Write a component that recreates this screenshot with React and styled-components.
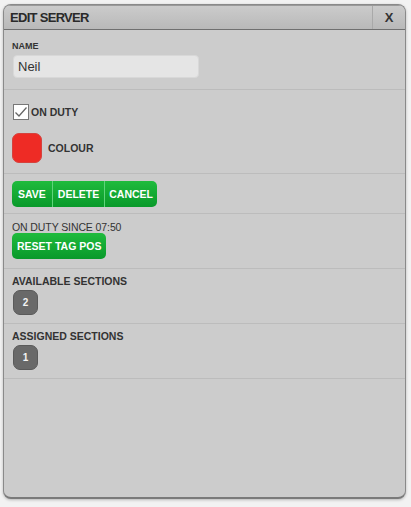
import React from "react";
import styled, { createGlobalStyle } from "styled-components";

const Global = createGlobalStyle`
  html, body { margin: 0; padding: 0; background: #f2f2f2; }
  body { font-family: "Liberation Sans", Arial, sans-serif; }
  * { box-sizing: border-box; }
`;

const Page = styled.div`
  padding: 4px 5px 8px 3px;
  height: 507px;
`;

const Panel = styled.div`
  height: 495px;
  background: #cccccc;
  border: 1px solid #8a8a8a;
  border-bottom: 2px solid #7a7a7a;
  border-radius: 8px;
  box-shadow: 0 1px 3px rgba(0,0,0,0.25);
  overflow: hidden;
  display: flex;
  flex-direction: column;
`;

const Header = styled.div`
  display: flex;
  height: 25px;
  background: linear-gradient(#cbcbcb, #b9b9b9);
  border-bottom: 1px solid #707070;
  border-top: 1px solid #9a9a9a;
`;

const Title = styled.div`
  flex: 1;
  padding-left: 6px;
  display: flex;
  align-items: center;
  font-size: 13px;
  font-weight: bold;
  color: #2a2a2a;
  letter-spacing: -0.7px;
`;

const Close = styled.div`
  width: 33px;
  display: flex;
  align-items: center;
  justify-content: center;
  border-left: 1px solid #a9a9a9;
  font-size: 13px;
  font-weight: bold;
  color: #333;
`;

const Section = styled.div`
  padding: ${p => p.$pad || "8px 8px 10px 8px"};
  border-bottom: 1px solid #bcbcbc;
  display: flex;
  flex-direction: column;
  gap: ${p => p.$gap || "0px"};
`;

const SmallLabel = styled.div`
  font-size: 9px;
  font-weight: bold;
  color: #333;
  margin-bottom: 4px;
`;

const Input = styled.div`
  width: 186px;
  height: 23px;
  margin-left: 1px;
  background: #e5e5e5;
  border-radius: 4px;
  border: 1px solid #d8d8d8;
  display: flex;
  align-items: center;
  padding-left: 4px;
  font-size: 13px;
  color: #333;
`;

const Row = styled.div`
  display: flex;
  align-items: center;
  gap: ${p => p.$gap || "4px"};
`;

const Check = styled.div`
  width: 16px;
  height: 16px;
  margin-left: 1px;
  background: #fff;
  border: 1px solid #777;
  display: flex;
  align-items: center;
  justify-content: center;
`;

const BoldText = styled.div`
  font-size: 10.5px;
  font-weight: bold;
  color: #333;
`;

const Swatch = styled.div`
  width: 30px;
  height: 30px;
  background: #ee2b25;
  border-radius: 7px;
  border: 1px solid #d5423d;
`;

const BtnGroup = styled.div`
  display: flex;
`;

const Btn = styled.div`
  height: 26px;
  padding: 0 ${p => p.$px || "7px"};
  display: flex;
  align-items: center;
  background: linear-gradient(#1fbb3d, #09992a);
  color: #fff;
  font-size: 10.5px;
  font-weight: bold;
  border-left: 1px solid #5fd47a;
  &:first-child { border-left: none; border-radius: 5px 0 0 5px; }
  &:last-child { border-radius: 0 5px 5px 0; }
  &:only-child { border-radius: 5px; }
`;

const Plain = styled.div`
  font-size: 10.5px;
  color: #333;
  letter-spacing: -0.1px;
`;

const Badge = styled.div`
  width: 25px;
  height: 25px;
  margin-left: 1px;
  background: #696969;
  border-radius: 7px;
  border: 1px solid #5a5a5a;
  color: #f4f4f4;
  font-size: 10px;
  font-weight: bold;
  display: flex;
  align-items: center;
  justify-content: center;
`;

export default function App() {
  return (
    <>
      <Global />
      <Page>
        <Panel>
          <Header>
            <Title>EDIT SERVER</Title>
            <Close>X</Close>
          </Header>
          <Section $pad="11px 8px 11px 8px">
            <SmallLabel>NAME</SmallLabel>
            <Input>Neil</Input>
          </Section>
          <Section $pad="14px 8px 10px 8px" $gap="13px">
            <Row $gap="2px">
              <Check>
                <svg width="14" height="14" viewBox="0 0 14 14">
                  <path d="M1.5 7.5 L5 11 L12.5 2.5" fill="none" stroke="#666" strokeWidth="1.3" />
                </svg>
              </Check>
              <BoldText>ON DUTY</BoldText>
            </Row>
            <Row $gap="6px">
              <Swatch />
              <BoldText>COLOUR</BoldText>
            </Row>
          </Section>
          <Section $pad="7px 8px 6px 8px">
            <BtnGroup>
              <Btn $px="6px">SAVE</Btn>
              <Btn $px="5px">DELETE</Btn>
              <Btn $px="4px">CANCEL</Btn>
            </BtnGroup>
          </Section>
          <Section $pad="7px 8px 9px 8px" $gap="0px">
            <Plain>ON DUTY SINCE 07:50</Plain>
            <BtnGroup>
              <Btn $px="5px">RESET TAG POS</Btn>
            </BtnGroup>
          </Section>
          <Section $pad="6px 8px 8px 8px" $gap="3px">
            <BoldText>AVAILABLE SECTIONS</BoldText>
            <Badge>2</Badge>
          </Section>
          <Section $pad="6px 8px 8px 8px" $gap="3px">
            <BoldText>ASSIGNED SECTIONS</BoldText>
            <Badge>1</Badge>
          </Section>
        </Panel>
      </Page>
    </>
  );
}
